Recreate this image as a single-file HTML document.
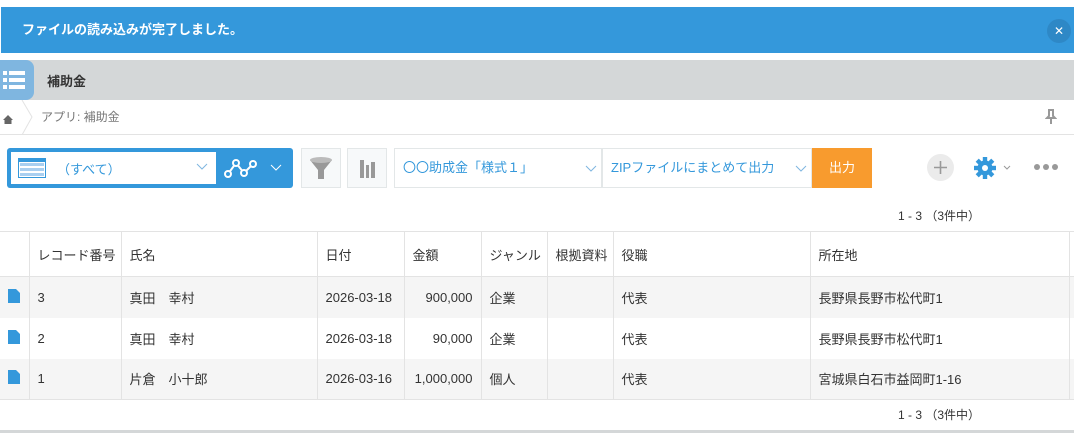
<!DOCTYPE html>
<html><head><meta charset="utf-8"><style>
*{box-sizing:border-box;margin:0;padding:0}
body{width:1074px;height:433px;overflow:hidden;background:#fff;font-family:"Liberation Sans","Noto Sans CJK JP",sans-serif;font-size:13px;color:#333;position:relative}
.abs{position:absolute}
.banner{left:1px;top:7px;width:1073px;height:46px;background:#3498db;color:#fff;font-weight:bold;font-size:13px;line-height:46px;padding-left:21px}
.close{left:1047px;top:19px;width:24px;height:24px;border-radius:50%;background:#2e88c6;color:#fff;text-align:center;line-height:24px;font-size:12px}
.hdr{left:0;top:60px;width:1074px;height:40px;background:#d4d7d8}
.appic{left:0;top:60px;width:34px;height:40px;background:#7fb6e0;border-radius:0 8px 8px 0}
.crumb{top:100px;left:0;width:1074px;height:35px;border-bottom:1px solid #e3e3e3}
.tb{left:7px;top:148px;width:286px;height:40px;background:#3498db;border-radius:3px}
.sel{left:11px;top:152px;width:205px;height:32px;background:#fff}
.gbtn{top:148px;width:40px;height:40px;background:#f7f9fa;border:1px solid #e3e7e8}
.dd{top:148px;height:40px;background:#fff;border:1px solid #e3e7e8;color:#3498db;font-size:13px;line-height:38px;padding-left:8px}
table{position:absolute;left:0;top:231px;width:1074px;border-collapse:collapse;table-layout:fixed}
td{height:41px;border-left:1px solid #e3e3e3;padding-left:8px;font-size:13px;white-space:nowrap;overflow:hidden}
tr.h td{height:45px;border-top:1px solid #e3e3e3;border-bottom:1px solid #e3e3e3}
tr.g td{background:#f5f5f5}
tr:last-child td{border-bottom:1px solid #e3e3e3}
td:first-child{border-left:none}
.r{text-align:right;padding-right:8px;padding-left:0}
</style></head><body>
<div class="abs banner">ファイルの読み込みが完了しました。</div>
<div class="abs close">✕</div>
<div class="abs hdr"></div>
<div class="abs appic"><svg width="34" height="40"><g fill="#fff"><rect x="3" y="11" width="4" height="4"/><rect x="9" y="11" width="16" height="4"/><rect x="3" y="18" width="4" height="4"/><rect x="9" y="18" width="16" height="4"/><rect x="3" y="25" width="4" height="4"/><rect x="9" y="25" width="16" height="4"/></g></svg></div>
<div class="abs" style="left:47px;top:71px;font-weight:bold;font-size:13px">補助金</div>
<div class="abs crumb"></div>
<svg class="abs" style="left:0;top:100px" width="40" height="35"><path d="M3 20L8 15L13 20H11.5V24H4.5V20Z" fill="#666"/><path d="M22 0L32 17L22 35" fill="none" stroke="#e3e3e3"/></svg>
<div class="abs" style="left:41px;top:108px;font-size:12px;color:#777">アプリ: 補助金</div>
<svg class="abs" style="left:1045px;top:109px" width="12" height="16"><path d="M3 1H9M4 1V7L2 9H10L8 7V1M6 9V15" stroke="#999" stroke-width="2" fill="none"/></svg>
<div class="abs tb"></div>
<div class="abs sel"></div>
<svg class="abs" style="left:18px;top:158px" width="28" height="20"><rect x="0.5" y="0.5" width="27" height="19" fill="#fff" stroke="#3498db"/><g fill="#a9cff0"><rect x="2" y="5" width="24" height="3"/><rect x="2" y="10" width="24" height="3"/><rect x="2" y="15" width="24" height="3"/></g><rect x="1" y="1" width="26" height="3" fill="#3498db"/></svg>
<div class="abs" style="left:57px;top:159px;color:#3498db">（すべて）</div>
<svg class="abs" style="left:196px;top:163px" width="12" height="8"><path d="M1 1L6 6L11 1" stroke="#7fb6e0" fill="none"/></svg>
<svg class="abs" style="left:224px;top:155px" width="36" height="26"><path d="M4 19L12 8L20 18L29 9" stroke="#fff" stroke-width="2" fill="none"/><g fill="#3498db" stroke="#fff" stroke-width="2"><circle cx="4" cy="19" r="3"/><circle cx="12" cy="8" r="3"/><circle cx="20" cy="18" r="3"/><circle cx="29" cy="9" r="3"/></g></svg>
<svg class="abs" style="left:270px;top:164px" width="12" height="8"><path d="M1 1L6 6L11 1" stroke="#fff" fill="none"/></svg>
<div class="abs gbtn" style="left:301px"><svg width="38" height="38"><path d="M8 11H30L22 21V30H16V21Z" fill="#999"/><ellipse cx="19" cy="11" rx="11" ry="3" fill="#bbb"/></svg></div>
<div class="abs gbtn" style="left:347px"><svg width="38" height="38"><g fill="#999"><rect x="12" y="11" width="4" height="18"/><rect x="18" y="16" width="3" height="13"/><rect x="23" y="13" width="4" height="16"/></g></svg></div>
<div class="abs dd" style="left:394px;width:208px">〇〇助成金「様式１」<svg style="position:absolute;right:4px;top:16px" width="12" height="8"><path d="M1 1L6 6L11 1" stroke="#7fb6e0" fill="none"/></svg></div>
<div class="abs dd" style="left:602px;width:210px">ZIPファイルにまとめて出力<svg style="position:absolute;right:4px;top:16px" width="12" height="8"><path d="M1 1L6 6L11 1" stroke="#7fb6e0" fill="none"/></svg></div>
<div class="abs" style="left:812px;top:148px;width:60px;height:40px;background:#f89b2e;color:#fff;text-align:center;line-height:40px;font-size:13px">出力</div>
<div class="abs" style="left:927px;top:154px;width:27px;height:27px;border-radius:50%;background:#ebebeb"><svg width="27" height="27"><path d="M13.5 7V20M7 13.5H20" stroke="#999" stroke-width="1.6"/></svg></div>
<svg class="abs" style="left:974px;top:156px" width="40" height="24"><g transform="translate(11,12)" fill="#3498db"><circle r="7.5"/><g id="t"><rect x="-2.2" y="-11" width="4.4" height="22"/></g><use href="#t" transform="rotate(45)"/><use href="#t" transform="rotate(90)"/><use href="#t" transform="rotate(135)"/><circle r="3" fill="#fff"/></g><path d="M30 10L33 13L36 10" stroke="#999" fill="none"/></svg>
<svg class="abs" style="left:1034px;top:162px" width="24" height="10"><g fill="#999"><circle cx="3" cy="5" r="3"/><circle cx="12" cy="5" r="3"/><circle cx="21" cy="5" r="3"/></g></svg>
<div class="abs" style="left:898px;top:207px;font-size:12px">1 - 3 （3件中）</div>
<table>
<colgroup><col style="width:29px"><col style="width:92px"><col style="width:196px"><col style="width:87px"><col style="width:77px"><col style="width:66px"><col style="width:66px"><col style="width:197px"><col style="width:259px"><col style="width:5px"></colgroup>
<tr class="h"><td></td><td>レコード番号</td><td>氏名</td><td>日付</td><td>金額</td><td>ジャンル</td><td>根拠資料</td><td>役職</td><td>所在地</td><td></td></tr>
<tr class="g"><td><svg width="12" height="14"><path d="M0 0H8L12 4V14H0Z" fill="#3498db"/></svg></td><td>3</td><td>真田　幸村</td><td>2026-03-18</td><td class="r">900,000</td><td>企業</td><td></td><td>代表</td><td>長野県長野市松代町1</td><td></td></tr>
<tr><td><svg width="12" height="14"><path d="M0 0H8L12 4V14H0Z" fill="#3498db"/></svg></td><td>2</td><td>真田　幸村</td><td>2026-03-18</td><td class="r">90,000</td><td>企業</td><td></td><td>代表</td><td>長野県長野市松代町1</td><td></td></tr>
<tr class="g"><td><svg width="12" height="14"><path d="M0 0H8L12 4V14H0Z" fill="#3498db"/></svg></td><td>1</td><td>片倉　小十郎</td><td>2026-03-16</td><td class="r">1,000,000</td><td>個人</td><td></td><td>代表</td><td>宮城県白石市益岡町1-16</td><td></td></tr>
</table>
<div class="abs" style="left:898px;top:406px;font-size:12px">1 - 3 （3件中）</div>
<div class="abs" style="left:0;top:430px;width:1074px;height:3px;background:#d4d7d8"></div>
</body></html>
